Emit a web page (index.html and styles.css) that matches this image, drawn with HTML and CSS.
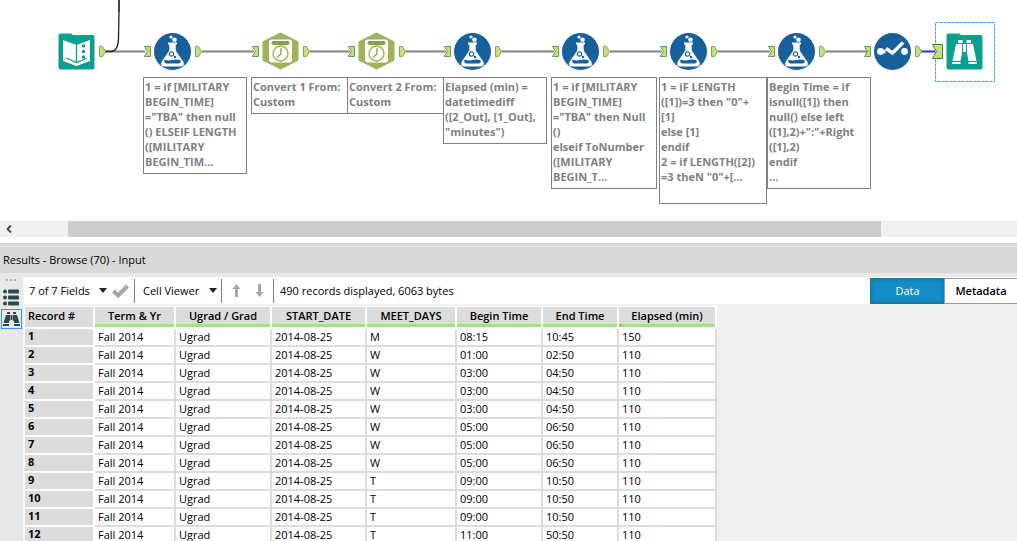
FILE: index.html
```html
<!DOCTYPE html>
<html lang="en">
<head>
  <meta charset="UTF-8" />
  <meta name="viewport" content="width=device-width, initial-scale=1.0" />
  <title>Workflow</title>
  <link rel="stylesheet" href="styles.css">
</head>
<body>
  <section class="canvas">
    <svg class="wires" width="1017" height="221">
      <defs>
        <path id="anchor-in" d="M.5 .5h6v10h-6l3-5z" fill="#c5e07a" stroke="#5f9a55" />
        <path id="anchor-out" d="M.5 .5h3l3 5-3 5h-3z" fill="#c5e07a" stroke="#7aab55" />
        <g id="flask">
          <circle r="18.5" fill="#17609c" />
          <circle cx="-1.5" cy="-14.5" r="1.6" fill="#fff" />
          <circle cx="2" cy="-11.7" r="2.3" fill="#fff" />
          <path d="M-4.5-9h9v2H3.2v6L11 10.5q1.5 4.5-3 4.5H-8q-4.500 0-3-4.500L-3.200-1v-6h-1.300z" fill="#fff" />
          <path d="M-8 8q4 1.500 8 .5t8 .3q1 3-2 3.200H-6q-3 0-2-4z" fill="#17609c" />
          <circle cx="-1" cy="2.500" r="2.200" fill="none" stroke="#17609c" stroke-width="1.200" />
          <circle cx="2.500" cy="5.500" r="1.200" fill="#17609c" />
        </g>
        <g id="convert">
          <path d="M0-18.500 18-9.500v19L0 18.500-18 9.500v-19z" fill="#9cb356" />
          <rect x="-11.500" y="-11.500" width="23" height="23" rx="2.500" fill="#fff" />
          <rect x="-9" y="-10" width="18" height="4" rx="2" fill="#87a13c" />
          <circle cy="2.500" r="7.500" fill="none" stroke="#9cb356" stroke-width="1.400" />
          <path d="M.5-3v6l-4 3.500" fill="none" stroke="#87a13c" stroke-width="1.300" />
        </g>
        <path id="tile" d="M-18-16q0-2 2-2h10.500q1 0 1.700 1.500H16q2 0 2 2V16q0 2-2 2h-32q-2 0-2-2z" fill="#0a9f8e" />
      </defs>

      <g fill="none" stroke="#808080" stroke-width="2">
        <path d="M105 51.500h40M202 51.500h52M310 51.500h40M406 51.500h40M502 51.500h52M610 51.500h52M718 51.500h52M826 51.500h42" />
        <path d="M119 0v12" />
      </g>
      <path d="M105 51.500h6q7 0 7.500-13l.5-27V0" fill="none" stroke="#222" stroke-width="1.300" />
      <path d="M921 51.500h14" stroke="#3030e8" stroke-width="2" />

      <use href="#anchor-out" x="99" y="46" />
      <use href="#anchor-in" x="144" y="46" /><use href="#anchor-out" x="195" y="46" />
      <use href="#anchor-in" x="252" y="46" /><use href="#anchor-out" x="303" y="46" />
      <use href="#anchor-in" x="348" y="46" /><use href="#anchor-out" x="399" y="46" />
      <use href="#anchor-in" x="444" y="46" /><use href="#anchor-out" x="495" y="46" />
      <use href="#anchor-in" x="552" y="46" /><use href="#anchor-out" x="603" y="46" />
      <use href="#anchor-in" x="660" y="46" /><use href="#anchor-out" x="711" y="46" />
      <use href="#anchor-in" x="768" y="46" /><use href="#anchor-out" x="819" y="46" />
      <use href="#anchor-in" x="864" y="46" /><use href="#anchor-out" x="915" y="46" />

      <!-- input -->
      <g transform="translate(76.500 51.500)">
        <use href="#tile" />
        <path d="M-13.500-11.500 0-6.500l13.500-5v21L0 14.500l-13.500-5z" fill="#fff" />
        <path d="M0-6.500v17M-10.500 6.500 0 11l10.500-4.500" fill="none" stroke="#0a9f8e" stroke-width="1.300" />
        <g fill="#0a9f8e"><circle cx="7" cy="-5.500" r="1.700" /><circle cx="7" cy="0" r="1.700" /><circle cx="7" cy="5.500" r="1.700" /></g>
      </g>
      <use href="#flask" x="172.500" y="51.500" />
      <use href="#convert" x="280.500" y="51" />
      <use href="#convert" x="376.500" y="51" />
      <use href="#flask" x="472.500" y="51.500" />
      <use href="#flask" x="580.500" y="51.500" />
      <use href="#flask" x="688.500" y="51.500" />
      <use href="#flask" x="796.500" y="51.500" />
      <!-- select -->
      <g transform="translate(892.500 51.500)">
        <circle r="18.500" fill="#17609c" />
        <circle cx="-12" r="3.400" fill="#fff" /><circle cx="12" r="3.400" fill="#fff" />
        <path d="M-12 0h5M-6.500-3 0 1.500 10.500-9" fill="none" stroke="#fff" stroke-width="3.400" />
      </g>
      <!-- browse -->
      <rect x="935.500" y="22.500" width="59" height="59" fill="none" stroke="#3399ff" stroke-dasharray="3 1" />
      <path d="M932.500 44.500h10v14h-10l4-7z" fill="#c5e07a" stroke="#3f7f4a" />
      <g transform="translate(964.500 51.500)">
        <use href="#tile" />
        <g fill="#fff">
          <path d="M-6.500-11.500h4.500v3h-4.500zM2-11.500h4.500v3H2zM-1.500-7.500h3v8h-3z" />
          <path d="M-8.500-7.500h6V1.500L-4 9.500h-8zM8.500-7.500h-6V1.500L4 9.500h8z" />
          <path d="M-12.500 10.500h8.500v2h-8.500zM4 10.500h8.500v2H4z" />
        </g>
      </g>
    </svg>

    <p class="note note-1">1 = if [MILITARY<br>BEGIN_TIME]<br>="TBA" then null<br>() ELSEIF LENGTH<br>([MILITARY<br>BEGIN_TIM...</p>
    <p class="note note-2">Convert 1 From:<br>Custom</p>
    <p class="note note-3">Convert 2 From:<br>Custom</p>
    <p class="note note-4">Elapsed (min) =<br>datetimediff<br>([2_Out], [1_Out],<br>"minutes")</p>
    <p class="note note-5">1 = if [MILITARY<br>BEGIN_TIME]<br>="TBA" then Null<br>()<br>elseif ToNumber<br>([MILITARY<br>BEGIN_T...</p>
    <p class="note note-6">1 = iF LENGTH<br>([1])=3 then "0"+<br>[1]<br>else [1]<br>endif<br>2 = if LENGTH([2])<br>=3 theN "0"+[...</p>
    <p class="note note-7">Begin Time = if<br>isnull([1]) then<br>null() else left<br>([1],2)+":"+Right<br>([1],2)<br>endif<br>...</p>
  </section>

  <div class="scrollbar">
    <button class="scroll-left" aria-label="Scroll left">
      <svg width="6" height="8"><path d="M5 .5 1.500 4 5 7.500" fill="none" stroke="#444" stroke-width="1.800" /></svg>
    </button>
    <div class="thumb"></div>
  </div>

  <h2 class="results-title">Results - Browse (70) - Input</h2>

  <main class="results">
    <nav class="side">
      <svg class="grip" width="11" height="2" fill="#b0b0b0"><path d="M0 0h2v2H0zM4 0h2v2H4zM8 0h2v2H8z" /></svg>
      <button class="side-button" aria-label="Messages">
        <svg width="17" height="17" fill="#2d4a4a">
          <circle cx="2" cy="2.500" r="2" /><circle cx="2" cy="8.500" r="2" /><circle cx="2" cy="14.500" r="2" />
          <rect x="5" y=".5" width="11" height="4" rx="1" /><rect x="5" y="6.500" width="11" height="4" rx="1" /><rect x="5" y="12.500" width="11" height="4" rx="1" />
        </svg>
      </button>
      <button class="side-button active" aria-label="Browse">
        <svg width="17" height="16" fill="#2d4a4a">
          <path d="M4 1h3v2H4zM10 1h3v2h-3zM7.500 4h2v5h-2z" />
          <path d="M3 4h4v5l-1.500 3H.5zM14 4h-4v5l1.500 3h5zM0 13h6v2H0zM11 13h6v2h-6z" />
        </svg>
      </button>
    </nav>

    <div class="panel">
      <div class="toolbar">
        <span class="dropdown fields">
          <select aria-label="Fields"><option>7 of 7 Fields</option></select>
        </span>
        <button class="icon-button check" aria-label="Apply">
          <svg width="17" height="14"><path d="M1.500 7 6 11.500 15.500 2" fill="none" stroke="#a6a6a6" stroke-width="4" /></svg>
        </button>
        <span class="dropdown viewer">
          <select aria-label="Viewer"><option>Cell Viewer</option></select>
        </span>
        <div class="arrows">
          <button class="icon-button" aria-label="Previous">
            <svg width="9" height="13"><path d="M4.500 0 8.500 5H6v8H3V5H.5z" fill="#a6a6a6" /></svg>
          </button>
          <button class="icon-button" aria-label="Next">
            <svg width="9" height="13"><path d="M4.500 13 8.500 8H6V0H3v8H.5z" fill="#a6a6a6" /></svg>
          </button>
        </div>
        <span class="status">490 records displayed, 6063 bytes</span>
        <button class="tab selected">Data</button>
        <button class="tab">Metadata</button>
      </div>

      <table>
        <colgroup>
          <col class="w-record"><col class="w-term"><col class="w-ugrad"><col class="w-start">
          <col class="w-days"><col class="w-begin"><col class="w-end"><col class="w-elapsed">
        </colgroup>
        <thead>
          <tr>
            <th>Record #</th>
            <th>Term &amp; Yr</th>
            <th>Ugrad / Grad</th>
            <th>START_DATE</th>
            <th>MEET_DAYS</th>
            <th>Begin Time</th>
            <th>End Time</th>
            <th class="partial">Elapsed (min)</th>
          </tr>
        </thead>
        <tbody>
          <tr><th>1</th><td>Fall 2014</td><td>Ugrad</td><td>2014-08-25</td><td>M</td><td>08:15</td><td>10:45</td><td>150</td></tr>
          <tr><th>2</th><td>Fall 2014</td><td>Ugrad</td><td>2014-08-25</td><td>W</td><td>01:00</td><td>02:50</td><td>110</td></tr>
          <tr><th>3</th><td>Fall 2014</td><td>Ugrad</td><td>2014-08-25</td><td>W</td><td>03:00</td><td>04:50</td><td>110</td></tr>
          <tr><th>4</th><td>Fall 2014</td><td>Ugrad</td><td>2014-08-25</td><td>W</td><td>03:00</td><td>04:50</td><td>110</td></tr>
          <tr><th>5</th><td>Fall 2014</td><td>Ugrad</td><td>2014-08-25</td><td>W</td><td>03:00</td><td>04:50</td><td>110</td></tr>
          <tr><th>6</th><td>Fall 2014</td><td>Ugrad</td><td>2014-08-25</td><td>W</td><td>05:00</td><td>06:50</td><td>110</td></tr>
          <tr><th>7</th><td>Fall 2014</td><td>Ugrad</td><td>2014-08-25</td><td>W</td><td>05:00</td><td>06:50</td><td>110</td></tr>
          <tr><th>8</th><td>Fall 2014</td><td>Ugrad</td><td>2014-08-25</td><td>W</td><td>05:00</td><td>06:50</td><td>110</td></tr>
          <tr><th>9</th><td>Fall 2014</td><td>Ugrad</td><td>2014-08-25</td><td>T</td><td>09:00</td><td>10:50</td><td>110</td></tr>
          <tr><th>10</th><td>Fall 2014</td><td>Ugrad</td><td>2014-08-25</td><td>T</td><td>09:00</td><td>10:50</td><td>110</td></tr>
          <tr><th>11</th><td>Fall 2014</td><td>Ugrad</td><td>2014-08-25</td><td>T</td><td>09:00</td><td>10:50</td><td>110</td></tr>
          <tr><th>12</th><td>Fall 2014</td><td>Ugrad</td><td>2014-08-25</td><td>T</td><td>11:00</td><td>50:50</td><td>110</td></tr>
        </tbody>
      </table>
    </div>
  </main>
</body>
</html>
```
FILE: styles.css
```css
* {
  box-sizing: border-box;
}
body {
  margin: 0;
  height: 100vh;
  overflow: hidden;
  display: flex;
  flex-direction: column;
  font-family: 'Segoe UI', 'Open Sans', sans-serif;
  font-size: 11px;
  color: #000;
  background-color: #fff;
}
button, select {
  font: inherit;
  color: inherit;
  border: 0;
  padding: 0;
  background: none;
}
svg {
  display: block;
}

/* workflow canvas */
.canvas {
  position: relative;
  flex: none;
  height: 221px;
  overflow: hidden;
}
.note {
  position: absolute;
  top: 77px;
  margin: 0;
  padding: 1px;
  border: 1px solid #808080;
  color: #808080;
  font-weight: 700;
  line-height: 15px;
  white-space: nowrap;
}
.note-1 { left: 143px; width: 104px; height: 97px; }
.note-2 { left: 251px; width: 97px; height: 37px; }
.note-3 { left: 347px; width: 97px; height: 37px; }
.note-4 { left: 443px; width: 104px; height: 67px; }
.note-5 { left: 551px; width: 106px; height: 112px; }
.note-6 { left: 659px; width: 108px; height: 127px; }
.note-7 { left: 767px; width: 104px; height: 112px; }

.scrollbar {
  flex: none;
  display: flex;
  height: 16px;
  margin-bottom: 6px;
  background-color: #f0f0f0;
}
.scroll-left {
  width: 5%;
  margin-right: 17px;
  padding-left: 6px;
}
.thumb {
  width: 80%;
  background-color: #cdcdcd;
}

/* results window */
.results-title {
  flex: none;
  margin: 0;
  padding: 3px 3px 0;
  height: 30px;
  font-size: 11px;
  font-weight: normal;
  line-height: 28px;
  background: linear-gradient(#d8d8d8 3px, #e6e6e6 3px, #e6e6e6 4px, #d8d8d8 4px);
}
.results {
  flex: 1;
  min-height: 0;
  display: flex;
  padding-top: 4px;
  background-color: #e8e8e8;
}
.side {
  flex: none;
  width: 24px;
  display: flex;
  flex-direction: column;
  align-items: center;
  border-right: 1px solid #f4f4f4;
}
.grip {
  margin: 2px 0 4px;
}
.side-button {
  display: flex;
  justify-content: center;
  align-items: center;
  width: 21px;
  height: 24px;
}
.side-button.active {
  height: 20px;
  border: 1px solid #3399ff;
}
.panel {
  flex: 1;
  min-width: 0;
  background-color: #f0f0f0;
}
.toolbar {
  display: flex;
  align-items: center;
  height: 27px;
  margin-bottom: 2px;
  background-color: #fff;
}
.dropdown {
  display: flex;
  align-items: center;
  justify-content: space-between;
}
.dropdown::after {
  content: '';
  border: 4px solid transparent;
  border-top: 5px solid #222;
  border-bottom: 0;
}
.dropdown select {
  appearance: none;
  outline: none;
}
.fields {
  width: 78px;
  margin-left: 5px;
}
.viewer {
  width: 83px;
  height: 24px;
  padding-left: 8px;
  border-left: 1px solid #808080;
}
.check {
  margin: 0 5px;
}
.arrows {
  display: flex;
  align-items: center;
  gap: 14px;
  height: 24px;
  margin-left: 4px;
  padding: 0 9px 0 10px;
  border: solid #808080;
  border-width: 0 1px;
}
.status {
  flex: 1;
  padding-left: 6px;
}
.tab {
  width: 73px;
  height: 26px;
  border: 1px solid #999;
  border-right: 0;
  font-weight: 600;
}
.tab.selected {
  width: 74px;
  border-color: #1279a8;
  color: #fff;
  background-color: #168fc6;
  box-shadow: inset 0 0 4px #0d6c98;
  font-weight: normal;
}

/* records */
table {
  table-layout: fixed;
  width: 693px;
  border-spacing: 0;
  border-top: 1px solid #fff;
}
.w-record { width: 71px; }
.w-term { width: 81px; }
.w-ugrad { width: 96px; }
.w-start { width: 95px; }
.w-days { width: 90px; }
.w-begin { width: 86px; }
.w-end { width: 76px; }
.w-elapsed { width: 98px; }
th, td {
  height: 18px;
  padding: 0 3px;
  line-height: 16px;
  text-align: left;
  white-space: nowrap;
  background-color: #fff;
  border-right: 2px solid #dcdcdc;
  border-bottom: 2px solid #dcdcdc;
}
th {
  font-weight: 700;
  line-height: 14px;
  background-color: #dcdcdc;
  border-color: #fff;
}
tbody th {
  vertical-align: top;
}
th:first-child {
  border-left: 1px solid #fff;
}
thead th {
  height: 22px;
  padding-bottom: 3px;
  font-weight: 600;
  line-height: 17px;
}
thead th + th {
  text-align: center;
  background: linear-gradient(#a0e47c, #a0e47c) bottom / 100% 3px no-repeat padding-box #dcdcdc;
}
thead th.partial {
  background: linear-gradient(90deg, #c4b454 3px, #a0e47c 3px) bottom / 100% 3px no-repeat padding-box #dcdcdc;
}
```
